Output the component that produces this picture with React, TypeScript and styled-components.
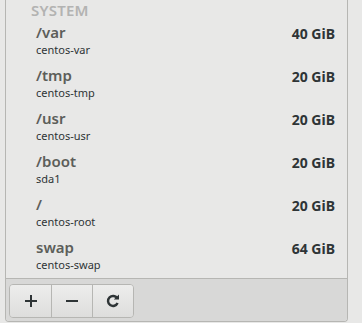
import React from "react";
import styled, { createGlobalStyle } from "styled-components";

const Global = createGlobalStyle`
  html, body { margin: 0; padding: 0; }
  body {
    background: #e8e8e7;
    font-family: "Noto Sans", "DejaVu Sans", sans-serif;
    width: 362px;
    height: 323px;
    overflow: hidden;
  }
`;

const Page = styled.div`
  width: 362px;
  height: 323px;
  display: flex;
  padding: 0 14px 1px 5px;
  box-sizing: border-box;
`;

const Panel = styled.div`
  flex: 1;
  display: flex;
  flex-direction: column;
  border: 1px solid #b6b6b3;
  border-top: none;
  border-radius: 0 0 4px 4px;
  background: #e8e8e7;
  overflow: hidden;
`;

const List = styled.div`
  flex: 1;
  overflow: hidden;
  padding: 0 12px 0 25px;
`;

const Header = styled.div`
  font-size: 15px;
  line-height: 18px;
  font-weight: 600;
  color: #b3b3b2;
  letter-spacing: 0.2px;
  margin-top: 1px;
  height: 22px;
`;

const Row = styled.div`
  display: flex;
  align-items: flex-start;
  justify-content: space-between;
  height: 43px;
  padding-left: 5px;
`;

const Names = styled.div`
  display: flex;
  flex-direction: column;
`;

const Mount = styled.div`
  font-size: 15px;
  line-height: 19px;
  font-weight: 600;
  color: #5c5e5a;
`;

const Device = styled.div`
  font-size: 11px;
  line-height: 15px;
  color: #2e3436;
`;

const Size = styled.div`
  font-size: 14px;
  line-height: 19px;
  font-weight: 700;
  color: #2e3436;
  padding-top: 1px;
`;

const Toolbar = styled.div`
  border-top: 1px solid #b6b6b3;
  background: #d8d8d7;
  padding: 5px 0 3px 3px;
  display: flex;
`;

const ButtonGroup = styled.div`
  display: flex;
  border: 1px solid #b6b6b3;
  border-radius: 4px;
  overflow: hidden;
`;

const ToolButton = styled.button`
  width: 41px;
  height: 32px;
  border: none;
  border-left: 1px solid #b6b6b3;
  background: linear-gradient(#ededec, #dddddc);
  display: flex;
  align-items: center;
  justify-content: center;
  padding: 0;
  &:first-child { border-left: none; }
`;

const rows = [
  { mount: "/var", dev: "centos-var", size: "40 GiB" },
  { mount: "/tmp", dev: "centos-tmp", size: "20 GiB" },
  { mount: "/usr", dev: "centos-usr", size: "20 GiB" },
  { mount: "/boot", dev: "sda1", size: "20 GiB" },
  { mount: "/", dev: "centos-root", size: "20 GiB" },
  { mount: "swap", dev: "centos-swap", size: "64 GiB" },
];

const Plus = () => (
  <svg width="12" height="12" viewBox="0 0 12 12">
    <rect x="5" y="0" width="2" height="12" fill="#2e3436" />
    <rect x="0" y="5" width="12" height="2" fill="#2e3436" />
  </svg>
);

const Minus = () => (
  <svg width="12" height="12" viewBox="0 0 12 12">
    <rect x="0" y="5" width="12" height="2" fill="#2e3436" />
  </svg>
);

const Refresh = () => (
  <svg width="14" height="14" viewBox="0 0 14 14">
    <path
      d="M11.2 4.2 A5 5 0 1 0 11.6 9"
      fill="none"
      stroke="#2e3436"
      strokeWidth="2.4"
    />
    <path d="M7.8 5.6 L13 5.6 L13 0.6 Z" fill="#2e3436" />
  </svg>
);

export default function App() {
  return (
    <>
      <Global />
      <Page>
        <Panel>
          <List>
            <Header>SYSTEM</Header>
            {rows.map((r) => (
              <Row key={r.mount}>
                <Names>
                  <Mount>{r.mount}</Mount>
                  <Device>{r.dev}</Device>
                </Names>
                <Size>{r.size}</Size>
              </Row>
            ))}
          </List>
          <Toolbar>
            <ButtonGroup>
              <ToolButton aria-label="add"><Plus /></ToolButton>
              <ToolButton aria-label="remove"><Minus /></ToolButton>
              <ToolButton aria-label="refresh"><Refresh /></ToolButton>
            </ButtonGroup>
          </Toolbar>
        </Panel>
      </Page>
    </>
  );
}
